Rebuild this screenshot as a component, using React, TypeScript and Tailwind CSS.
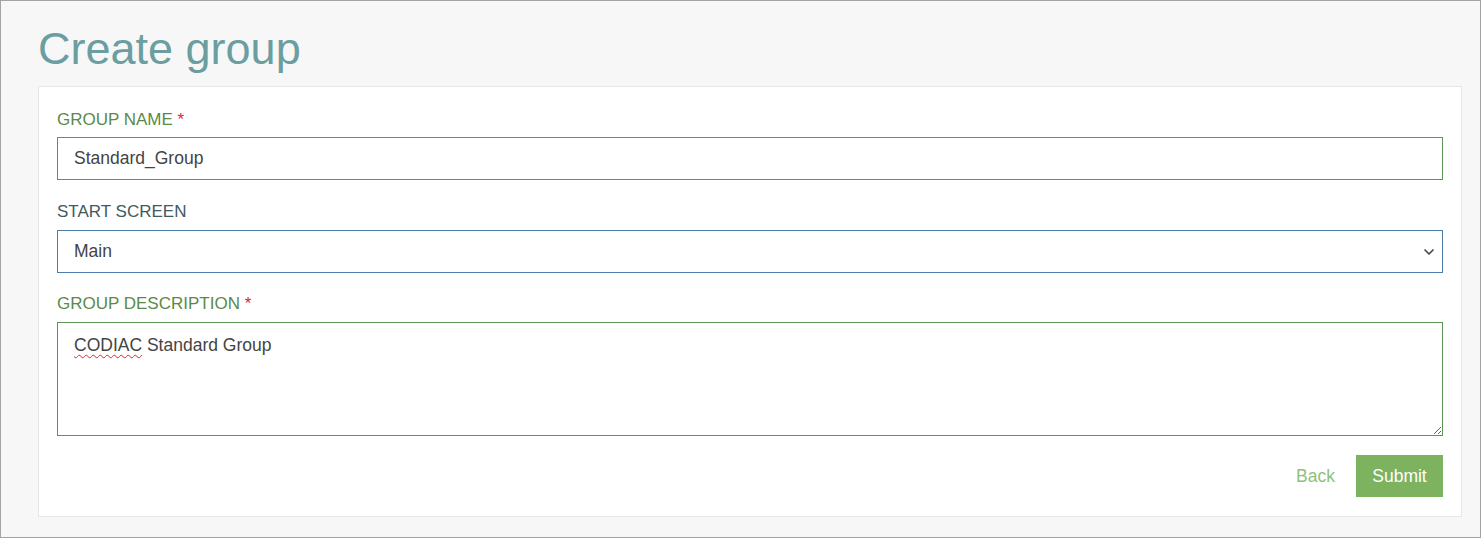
import { ChevronDown } from "lucide-react";

const labelCls = "block h-5 leading-5 text-[17px] uppercase";
const boxCls = "w-full h-[43px] border bg-white px-4 text-[17.5px] text-[#444] outline-none";

const App = () => {
    return (
        <div className="w-[1481px] h-[538px] border border-[#a3a3a3] bg-[#f7f7f7] font-['Liberation_Sans',Arial,sans-serif] overflow-hidden">
            <h1 className="ml-[37px] mt-[25px] text-[45px] leading-[45px] text-[#6b9ea1] font-normal">Create group</h1>
            <div className="ml-[37px] mt-[15px] w-[1424px] bg-white border border-[#e6e6e6] px-[18px] pt-[23px] pb-[19px]">
                <div>
                    <label className={labelCls + " mb-[7px] text-[#5b8a48]"}>
                        Group Name <span className="text-[#e0262b]">*</span>
                    </label>
                    <input className={boxCls + " border-[#5f9458]"} defaultValue="Standard_Group" />
                </div>

                <div className="mt-[22px]">
                    <label className={labelCls + " mb-[8px] text-[#3f5a62]"}>Start Screen</label>
                    <div className="relative">
                        <select className={boxCls + " border-[#4c7eab] appearance-none"} defaultValue="Main">
                            <option>Main</option>
                        </select>
                        <ChevronDown className="absolute right-[6px] top-[14px] w-4 h-4 text-[#444]" strokeWidth={2.5} />
                    </div>
                </div>

                <div className="mt-[21px]">
                    <label className={labelCls + " mb-[8px] text-[#5b8a48]"}>
                        Group Description <span className="text-[#e0262b]">*</span>
                    </label>
                    <div
                        role="textbox"
                        className="w-full h-[114px] border border-[#5f9458] bg-white px-4 pt-[12px] text-[17.5px] leading-5 text-[#444] resize-y overflow-auto"
                    >
                        <span className="underline decoration-wavy decoration-[#e0262b] decoration-1 underline-offset-[3px]">CODIAC</span> Standard Group
                    </div>
                </div>

                <div className="flex justify-end items-center gap-[21px] mt-[19px]">
                    <button className="text-[17.5px] text-[#8dc27c]">Back</button>
                    <button className="w-[87px] h-[42px] bg-[#7db25f] text-white text-[17.5px]">Submit</button>
                </div>
            </div>
        </div>
    )
}
export default App
